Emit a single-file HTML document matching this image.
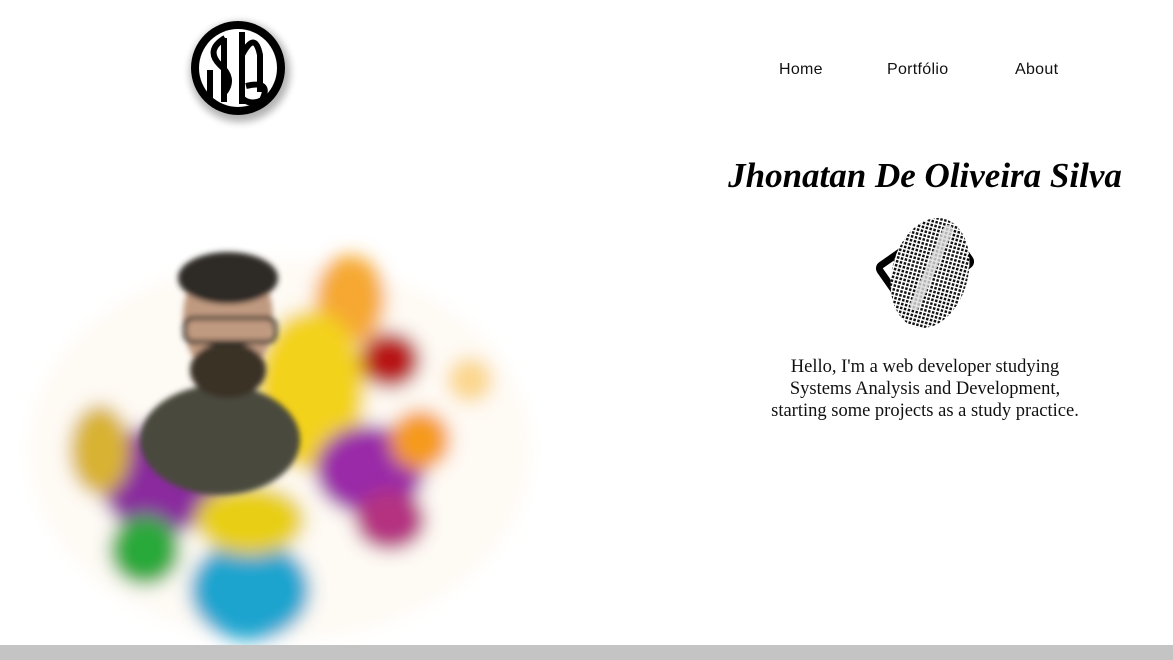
<!DOCTYPE html>
<html><head><meta charset="utf-8"><style>
html,body{margin:0;padding:0;background:#fff;width:1173px;height:660px;overflow:hidden;position:relative;font-family:"Liberation Sans",sans-serif}
nav a{position:absolute;top:61px;font-size:16px;color:#111;text-decoration:none;letter-spacing:.3px}
.name{position:absolute;left:700px;width:450px;top:156px;text-align:center;white-space:nowrap;font-family:"Liberation Serif",serif;font-style:italic;font-weight:bold;font-size:35px;color:#000;letter-spacing:0}
.bio{position:absolute;left:700px;width:450px;top:356px;text-align:center;font-family:"Liberation Serif",serif;font-size:18.5px;line-height:22px;color:#111}
.bar{position:absolute;left:0;top:645px;width:1173px;height:15px;background:#c4c4c4}
</style></head><body>
<svg style="position:absolute;left:180px;top:10px" width="120" height="120" viewBox="0 0 120 120">
<defs><filter id="s"><feGaussianBlur stdDeviation="4"/></filter></defs>
<circle cx="60" cy="62" r="50" fill="#000" opacity=".3" filter="url(#s)"/>
<circle cx="58" cy="58" r="47" fill="#000"/>
<circle cx="58" cy="58" r="39" fill="#fff"/>
<path d="M45 28 Q25 40 40 55 Q55 68 45 82 M30 60 V88 M44 28 V92 M62 22 V94 M62 45 Q75 20 80 45 V82 M66 76 Q92 70 82 90 Q70 96 62 88" stroke="#000" stroke-width="6" fill="none"/>
</svg>
<nav><a style="left:779px">Home</a><a style="left:887px">Portfólio</a><a style="left:1015px">About</a></nav>
<div class="name">Jhonatan De Oliveira Silva</div>
<svg style="position:absolute;left:870px;top:205px" width="110" height="130" viewBox="0 0 110 130">
<defs><pattern id="fp" width="4" height="4" patternUnits="userSpaceOnUse"><rect width="4" height="4" fill="#fff"/><rect width="2.5" height="2.5" fill="#111"/></pattern></defs>
<rect x="15" y="35" width="80" height="50" rx="4" transform="rotate(-35 55 60)" fill="none" stroke="#000" stroke-width="7"/>
<ellipse cx="60" cy="68" rx="38" ry="56" fill="url(#fp)" transform="rotate(15 60 68)"/>
<path d="M45 100 L78 25" stroke="#ddd" stroke-width="10" stroke-linecap="round" opacity=".8"/>
</svg>
<div class="bio">Hello, I'm a web developer studying<br>Systems Analysis and Development,<br>starting some projects as a study practice.</div>
<svg style="position:absolute;left:0;top:170px" width="560" height="475" viewBox="0 0 560 475">
<defs><filter id="b"><feGaussianBlur stdDeviation="9"/></filter><filter id="b2"><feGaussianBlur stdDeviation="3"/></filter></defs>
<g filter="url(#b)">
<ellipse cx="280" cy="280" rx="250" ry="190" fill="#fdf8ef" opacity=".7"/>
<ellipse cx="350" cy="130" rx="35" ry="45" fill="#f6a830"/>
<ellipse cx="310" cy="220" rx="55" ry="80" fill="#f3d21b"/>
<ellipse cx="390" cy="190" rx="30" ry="28" fill="#b81818"/>
<ellipse cx="370" cy="300" rx="55" ry="45" fill="#9a2aa8"/>
<ellipse cx="390" cy="350" rx="35" ry="30" fill="#b43080"/>
<ellipse cx="160" cy="310" rx="60" ry="55" fill="#8a2b9e"/>
<ellipse cx="145" cy="380" rx="35" ry="35" fill="#29a93a"/>
<ellipse cx="250" cy="420" rx="60" ry="50" fill="#1ba4cf"/>
<ellipse cx="250" cy="350" rx="55" ry="35" fill="#e8cf16"/>
<ellipse cx="420" cy="270" rx="30" ry="30" fill="#f59a1c"/>
<ellipse cx="100" cy="280" rx="30" ry="45" fill="#d8b232"/>
<ellipse cx="470" cy="210" rx="22" ry="22" fill="#fbd68c"/>
</g>
<g filter="url(#b2)">
<ellipse cx="220" cy="270" rx="80" ry="55" fill="#4a4a3c"/>
<ellipse cx="228" cy="148" rx="45" ry="62" fill="#c09a80"/>
<ellipse cx="228" cy="108" rx="50" ry="26" fill="#2f2a25"/>
<ellipse cx="228" cy="200" rx="38" ry="28" fill="#3a3028"/>
<rect x="185" y="148" width="90" height="24" rx="8" fill="none" stroke="#222" stroke-width="4"/>
</g>
</svg>
<div class="bar"></div>
</body></html>
